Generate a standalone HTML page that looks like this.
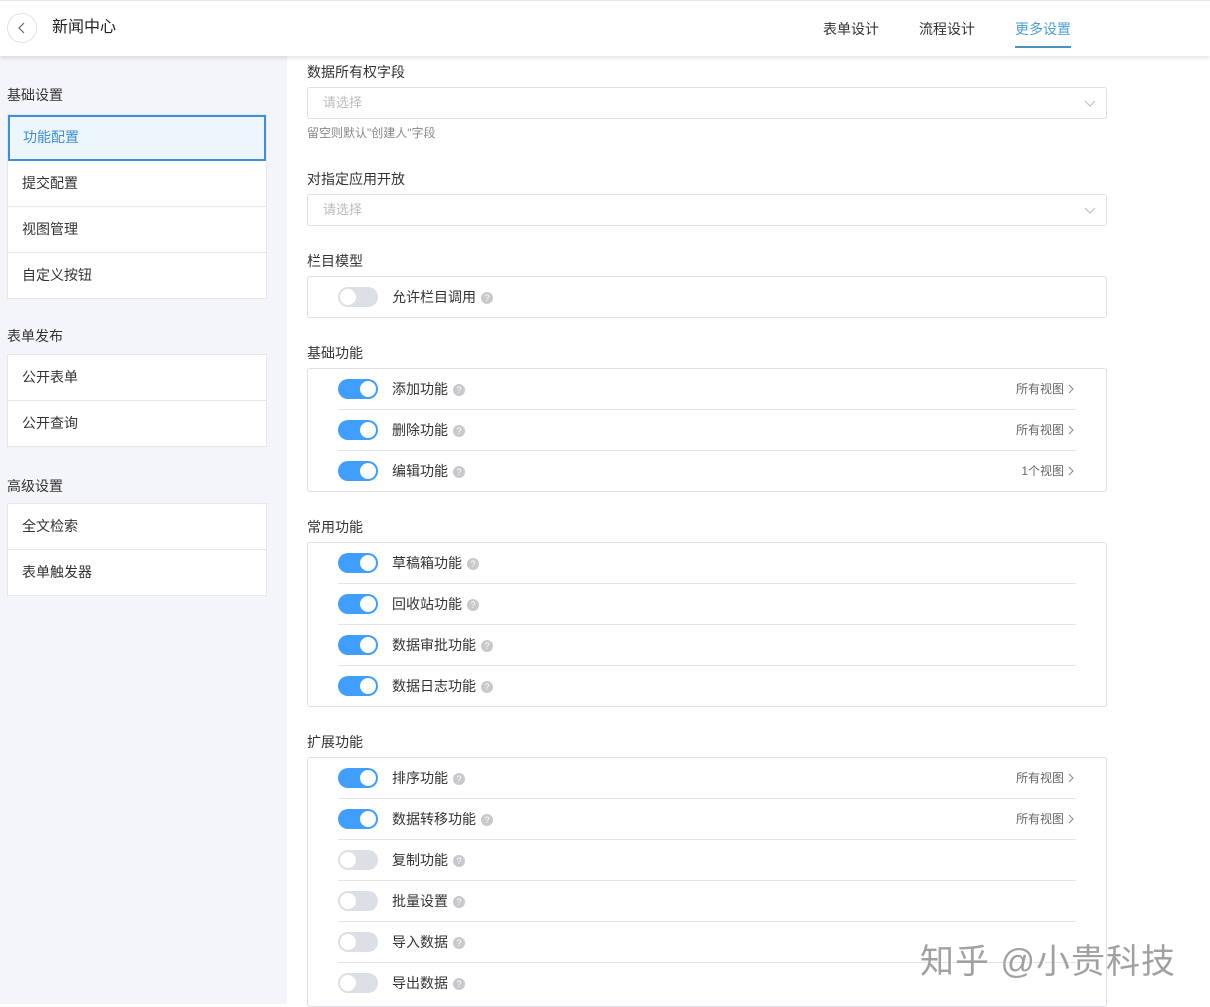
<!DOCTYPE html>
<html><head><meta charset="utf-8"><style>
*{box-sizing:border-box;margin:0;padding:0}
body{width:1210px;height:1004px;overflow:hidden;background:#fff;font-family:"Liberation Sans","Noto Sans CJK SC",sans-serif;color:#333;position:relative}
.a{position:absolute}
.hdr{left:0;top:0;width:1210px;height:56px;background:#fff;box-shadow:0 2px 4px rgba(0,0,0,.12);z-index:5;border-top:1px solid #e5e5e5}
.side{left:0;top:56px;width:287px;height:948px;background:#f4f5f8}
.gt{font-size:14px;color:#333}
.grp{left:7px;width:260px;background:#fff;border:1px solid #e6e7ea}
.it{height:46px;line-height:45px;padding-left:14px;font-size:14px;border-bottom:1px solid #e6e7ea}
.it:last-child{border-bottom:none;height:45px}
.lab{left:307px;font-size:14px;color:#333}
.sel{left:307px;width:800px;height:32px;border:1px solid #dcdfe6;border-radius:3px;font-size:13px;color:#bbb;padding-left:15px;line-height:30px}
.box{left:307px;width:800px;border:1px solid #dcdfe6;border-radius:3px}
.row{position:relative;height:41px;margin-left:30px;margin-right:30px;border-bottom:1px solid #e4e4e4}
.row:last-child{border-bottom:none}
.tg{position:absolute;left:0;top:10px;width:40px;height:20px;border-radius:10px;background:#dcdfe6}
.tg::after{content:"";position:absolute;left:2px;top:2px;width:16px;height:16px;border-radius:50%;background:#fff}
.on{background:#409eff}
.on::after{left:22px}
.rl{position:absolute;left:54px;top:0;line-height:40px;font-size:14px;color:#333}
.q{display:inline-block;width:12px;height:12px;border-radius:50%;background:#c8c9cc;color:#fff;font-size:9px;line-height:12px;text-align:center;vertical-align:1px;margin-left:5px}
.rv{position:absolute;right:2px;top:0;line-height:40px;font-size:12px;color:#666}
.rv svg{margin-left:4px;vertical-align:-1px}
</style></head><body>
<div class="a hdr">
 <div class="a" style="left:7px;top:12px;width:30px;height:30px;border:1px solid #e3e3e3;border-radius:50%"><svg width="30" height="30" style="position:absolute;left:-1px;top:-1px"><path d="M17 10l-5 5 5 5" fill="none" stroke="#666" stroke-width="1.2"/></svg></div>
 <div class="a" style="left:52px;top:17px;font-size:16px;color:#222;line-height:20px">新闻中心</div>
 <div class="a" style="left:823px;top:18px;font-size:14px;line-height:20px">表单设计</div>
 <div class="a" style="left:919px;top:18px;font-size:14px;line-height:20px">流程设计</div>
 <div class="a" style="left:1015px;top:18px;font-size:14px;line-height:20px;color:#4a9fd8">更多设置</div>
 <div class="a" style="left:1015px;top:45px;width:56px;height:2px;background:#4a90c0"></div>
</div>
<div class="a side"></div>
<div class="a gt" style="left:7px;top:85px">基础设置</div>
<div class="a grp" style="top:114px">
 <div class="it" style="background:#eef6fd;border:2px solid #3d8fd6;color:#3d8fd6;line-height:41px;padding-left:13px">功能配置</div>
 <div class="it">提交配置</div><div class="it">视图管理</div><div class="it">自定义按钮</div>
</div>
<div class="a gt" style="left:7px;top:326px">表单发布</div>
<div class="a grp" style="top:354px"><div class="it">公开表单</div><div class="it">公开查询</div></div>
<div class="a gt" style="left:7px;top:476px">高级设置</div>
<div class="a grp" style="top:503px"><div class="it">全文检索</div><div class="it">表单触发器</div></div>

<div class="a lab" style="top:62px">数据所有权字段</div>
<div class="a sel" style="top:87px">请选择<svg class="a" style="right:10px;top:10px" width="12" height="10"><path d="M1 3l5 5 5-5" fill="none" stroke="#bbb"/></svg></div>
<div class="a" style="left:307px;top:124px;font-size:12px;color:#888">留空则默认"创建人"字段</div>
<div class="a lab" style="top:169px">对指定应用开放</div>
<div class="a sel" style="top:194px">请选择<svg class="a" style="right:10px;top:10px" width="12" height="10"><path d="M1 3l5 5 5-5" fill="none" stroke="#bbb"/></svg></div>

<div class="a lab" style="top:251px">栏目模型</div>
<div class="a box" style="top:276px;height:42px"><div class="row"><span class="tg"></span><span class="rl">允许栏目调用<span class="q">?</span></span></div></div>

<div class="a lab" style="top:343px">基础功能</div>
<div class="a box" style="top:368px;height:124px">
<div class="row"><span class="tg on"></span><span class="rl">添加功能<span class="q">?</span></span><span class="rv">所有视图<svg width="6" height="10"><path d="M1 1l4 4-4 4" fill="none" stroke="#888"/></svg></span></div>
<div class="row"><span class="tg on"></span><span class="rl">删除功能<span class="q">?</span></span><span class="rv">所有视图<svg width="6" height="10"><path d="M1 1l4 4-4 4" fill="none" stroke="#888"/></svg></span></div>
<div class="row"><span class="tg on"></span><span class="rl">编辑功能<span class="q">?</span></span><span class="rv">1个视图<svg width="6" height="10"><path d="M1 1l4 4-4 4" fill="none" stroke="#888"/></svg></span></div>
</div>

<div class="a lab" style="top:517px">常用功能</div>
<div class="a box" style="top:542px;height:165px">
<div class="row"><span class="tg on"></span><span class="rl">草稿箱功能<span class="q">?</span></span></div>
<div class="row"><span class="tg on"></span><span class="rl">回收站功能<span class="q">?</span></span></div>
<div class="row"><span class="tg on"></span><span class="rl">数据审批功能<span class="q">?</span></span></div>
<div class="row"><span class="tg on"></span><span class="rl">数据日志功能<span class="q">?</span></span></div>
</div>

<div class="a lab" style="top:732px">扩展功能</div>
<div class="a box" style="top:757px;height:250px">
<div class="row"><span class="tg on"></span><span class="rl">排序功能<span class="q">?</span></span><span class="rv">所有视图<svg width="6" height="10"><path d="M1 1l4 4-4 4" fill="none" stroke="#888"/></svg></span></div>
<div class="row"><span class="tg on"></span><span class="rl">数据转移功能<span class="q">?</span></span><span class="rv">所有视图<svg width="6" height="10"><path d="M1 1l4 4-4 4" fill="none" stroke="#888"/></svg></span></div>
<div class="row"><span class="tg"></span><span class="rl">复制功能<span class="q">?</span></span></div>
<div class="row"><span class="tg"></span><span class="rl">批量设置<span class="q">?</span></span></div>
<div class="row"><span class="tg"></span><span class="rl">导入数据<span class="q">?</span></span></div>
<div class="row"><span class="tg"></span><span class="rl">导出数据<span class="q">?</span></span></div>
</div>
<div class="a" style="left:920px;top:934px;font-size:34px;color:rgba(130,130,130,.75);letter-spacing:1px;text-shadow:1px 1px 0 #fff">知乎 @小贵科技</div>
</body></html>
